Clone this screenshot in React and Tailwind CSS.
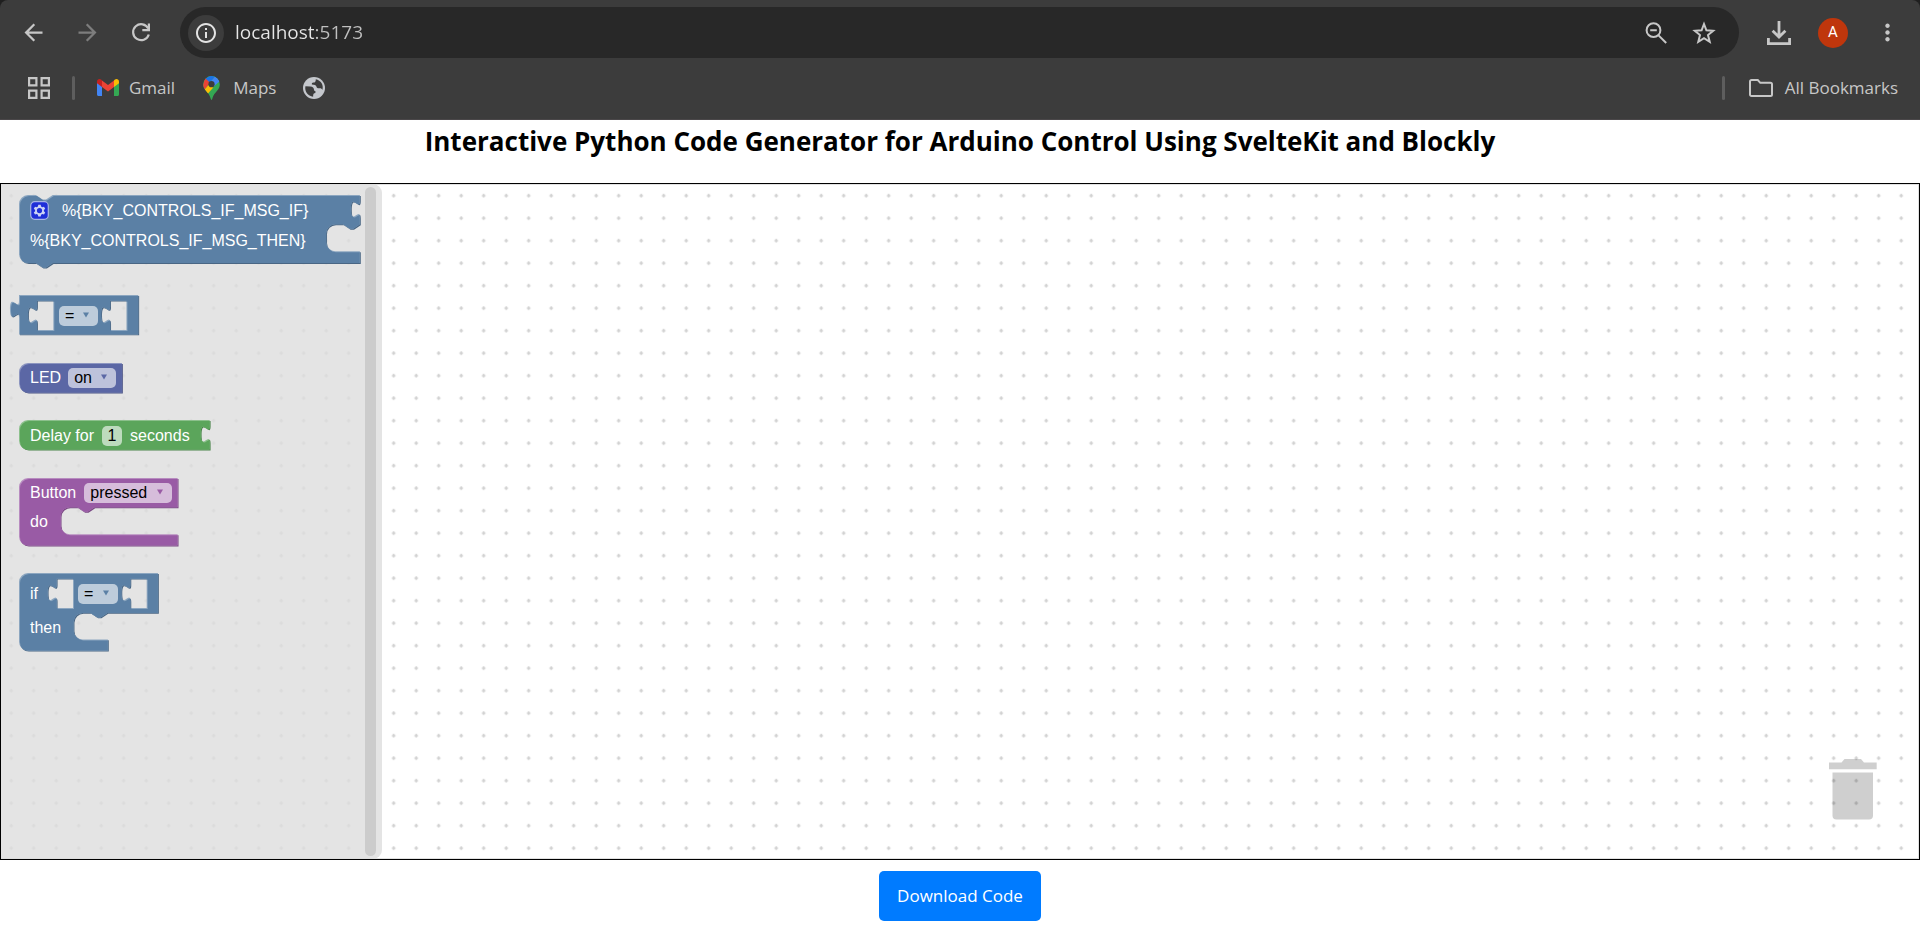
import { useId, useState } from "react";
import { MdArrowBack, MdArrowForward, MdInfoOutline, MdMoreVert } from "react-icons/md";

const TAB = "c 0,10 -8,-8 -8,7.5 s 8,-2.5 8,7.5";
const NOTCH = "l -6,4 h -3 l -6,-4";

const PALETTE = {
  logic: { main: "#5b80a5", light: "#8ca6c0", dark: "#496684" },
  led: { main: "#5b67a5", light: "#8c95c0", dark: "#495284" },
  delay: { main: "#5ba55b", light: "#8cc08c", dark: "#498449" },
  button: { main: "#995ba5", light: "#b88cc0", dark: "#7a4984" },
};

const hole = (x) => `M ${x},5 h 14.5 v 26 h -14.5 v -6 c 0,-10 -8,8 -8,-7.5 s 8,2.5 8,-7.5 Z`;

const SHAPES = {
  controlsIf: `M 0,8 a 8,8 0 0 1 8,-8 h 7 l 6,4 h 3 l 6,-4 H 303 v 5 ${TAB} V 26 ${NOTCH} h -7 a 8,8 0 0 0 -8,8 V 42 a 8,8 0 0 0 8,8 H 303 V 60.5 H 30 ${NOTCH} h -7 a 8,8 0 0 1 -8,-8 Z`,
  compare: `M 0,0 H 106 V 35 H 0 V 20 c 0,-10 -8,8 -8,-7.5 s 8,2.5 8,-7.5 Z ${hole(16)} ${hole(81)}`,
  led: "M 0,8 a 8,8 0 0 1 8,-8 H 91.5 V 26.3 H 8 a 8,8 0 0 1 -8,-8 Z",
  delay: `M 0,8 a 8,8 0 0 1 8,-8 H 169.5 v 5 ${TAB} V 26.3 H 8 a 8,8 0 0 1 -8,-8 Z`,
  button: `M 0,8 a 8,8 0 0 1 8,-8 H 141 V 26 H 67 ${NOTCH} h -7 a 8,8 0 0 0 -8,8 V 42 a 8,8 0 0 0 8,8 H 141 V 60 H 8 a 8,8 0 0 1 -8,-8 Z`,
  ifThen: `M 0,8 a 8,8 0 0 1 8,-8 H 123.5 V 35.5 H 78.5 ${NOTCH} h -7 a 8,8 0 0 0 -8,8 V 51 a 8,8 0 0 0 8,8 H 79 V 69 H 8 a 8,8 0 0 1 -8,-8 Z ${hole(33.5)} ${hole(99)}`,
};

function Block({ shape, tone, className, children }) {
  const id = useId();
  const c = PALETTE[tone];
  const d = SHAPES[shape];
  return (
    <div className={`relative ${className}`}>
      <svg className="absolute inset-0 h-full w-full overflow-visible" aria-hidden="true">
        <clipPath id={id}>
          <path d={d} clipRule="evenodd" />
        </clipPath>
        <g transform="scale(1.125)" fillRule="evenodd">
          <path d={d} fill={c.dark} transform="translate(0.8 0.8)" />
          <path d={d} fill={c.light} />
          <g clipPath={`url(#${id})`}>
            <path d={d} fill={c.main} transform="translate(0.9 0.9)" />
          </g>
        </g>
      </svg>
      <div className="relative">{children}</div>
    </div>
  );
}

function Picker({ label, options, tone, className }) {
  return (
    <span className="relative flex">
      <select
        aria-label={label}
        className={`h-5 appearance-none rounded-[5px] bg-white/60 pl-[6px] leading-5 text-black outline-none ${className}`}
      >
        {options.map((o) => (
          <option key={o}>{o}</option>
        ))}
      </select>
      <svg className="pointer-events-none absolute top-[6px] right-[9px] h-[6px] w-[6px]" viewBox="0 0 6 6" aria-hidden="true">
        <path d="M0 .5h6L3 5.5z" fill={PALETTE[tone].main} />
      </svg>
    </span>
  );
}

const OPERATORS = ["=", "≠", "<", "≤", ">", "≥"];

function Toolbox() {
  const [seconds, setSeconds] = useState("1");
  return (
    <aside className="relative flex w-[381px] shrink-0 justify-between rounded-r-[9px] bg-[#dddddd]/80 pr-[6px]">
      <div className="flex flex-col items-start gap-[27px] pt-[11px] pl-[18px] text-[16px] leading-5 text-white">
        <Block shape="controlsIf" tone="logic" className="h-[73px] w-[342px]">
          <div className="flex h-[31px] items-center gap-[13px] pl-[11px]">
            <button aria-label="Block settings" className="flex size-[19px] items-center justify-center">
              <svg viewBox="0 0 19 19" className="size-[19px]">
                <rect x=".7" y=".7" width="17.6" height="17.6" rx="4" fill="#1f2fd8" stroke="#a9b5e4" strokeWidth="1.2" />
                <path
                  d="M8.3 3.8h2.4l.4 1.7 1.2.7 1.7-.5 1.2 2.1-1.3 1.2v1.3l1.3 1.2-1.2 2.1-1.7-.5-1.2.7-.4 1.7H8.3l-.4-1.7-1.2-.7-1.7.5-1.2-2.1 1.3-1.2V9L3.8 7.8 5 5.7l1.7.5 1.2-.7z M9.5 7a2.6 2.6 0 1 0 0 5.2 2.6 2.6 0 0 0 0-5.2z"
                  fill="#ccd3f5"
                  fillRule="evenodd"
                />
              </svg>
            </button>
            <span>%{"{BKY_CONTROLS_IF_MSG_IF}"}</span>
          </div>
          <div className="flex h-[29px] items-center pl-[11px]">%{"{BKY_CONTROLS_IF_MSG_THEN}"}</div>
        </Block>

        <Block shape="compare" tone="logic" className="h-[41px] w-[120px]">
          <div className="flex h-[41px] items-center pl-10">
            <Picker label="Comparison" options={OPERATORS} tone="logic" className="w-[39px]" />
          </div>
        </Block>

        <Block shape="led" tone="led" className="h-[30px] w-[104px]">
          <div className="flex h-[30px] items-center gap-[7px] pl-[11px]">
            LED
            <Picker label="LED state" options={["on", "off"]} tone="led" className="w-[48px]" />
          </div>
        </Block>

        <Block shape="delay" tone="delay" className="h-[31px] w-[192px]">
          <div className="flex h-[31px] items-center gap-2 pl-[11px]">
            <label htmlFor="delay-seconds">Delay for</label>
            <input
              id="delay-seconds"
              value={seconds}
              onChange={(e) => setSeconds(e.target.value)}
              className="h-5 w-5 rounded-[5px] bg-white/60 text-center text-black outline-none"
            />
            seconds
          </div>
        </Block>

        <Block shape="button" tone="button" className="h-[68px] w-[160px]">
          <div className="flex h-[30px] items-center gap-2 pl-[11px]">
            Button
            <Picker label="Button state" options={["pressed", "released"]} tone="button" className="w-[88px]" />
          </div>
          <div className="flex h-[27px] items-center pl-[11px]">do</div>
        </Block>

        <Block shape="ifThen" tone="logic" className="h-[79px] w-[140px]">
          <div className="flex h-[41px] items-center pl-[11px]">
            <span className="w-12">if</span>
            <Picker label="Condition" options={OPERATORS} tone="logic" className="w-10" />
          </div>
          <div className="flex h-[27px] items-center pl-[11px]">then</div>
        </Block>
      </div>
      <div className="my-[3px] w-[11px] rounded-full bg-[#cccccc]" />
    </aside>
  );
}

function Grid() {
  return (
    <svg className="absolute inset-0 h-full w-full" aria-hidden="true">
      <defs>
        <pattern id="dots" width="22.5" height="22.5" patternUnits="userSpaceOnUse">
          <path d="M8.4 11.7h3.6M10.2 9.9v3.6" stroke="#d0d0d0" strokeWidth="1.6" />
        </pattern>
      </defs>
      <rect width="100%" height="100%" fill="url(#dots)" />
    </svg>
  );
}

function GmailIcon() {
  return (
    <svg viewBox="0 0 22 17" className="h-[17px] w-[22px]" aria-hidden="true">
      <path d="M0 3v12.5C0 16.3.7 17 1.5 17H5V6.5z" fill="#4285f4" />
      <path d="M22 3v12.5c0 .8-.7 1.5-1.5 1.5H17V6.5z" fill="#34a853" />
      <path d="M17 1.5V8l5-3.8V2.5C22 .3 19.5-.7 17.9.6z" fill="#fbbc04" />
      <path d="M5 8V1.5L11 6l6-4.5V8l-6 4.500z" fill="#ea4335" />
      <path d="M0 2.5v1.7L5 8V1.5L4.1.6C2.5-.7 0 .3 0 2.5z" fill="#c5221f" />
    </svg>
  );
}

function MapsIcon() {
  return (
    <svg viewBox="0 0 17 24" className="h-6 w-[17px]" aria-hidden="true">
      <clipPath id="pin">
        <path d="M8.5 0A8.3 8.3 0 0 0 .2 8.3c0 2.4.9 4.2 2.3 6 2.6 3.1 4.5 5 5.2 8.500.2 1.500 1.400 1.500 1.600 0 .7-3.500 2.600-5.400 5.200-8.500 1.400-1.800 2.300-3.600 2.300-6A8.300 8.300 0 0 0 8.500 0z" />
      </clipPath>
      <g clipPath="url(#pin)">
        <rect width="17" height="24" fill="#34a853" />
        <path d="M2 3l4.600 4L12 .8 8-1z" fill="#1a73e8" />
        <path d="M-1 12l2.800 1.500L7 6.800 2 2z" fill="#ea4335" />
        <path d="M1.500 13.800L6 8.500l4.300 3-6.400 7.300z" fill="#fbbc04" />
        <path d="M12 .5L7 6.500l4 3.800L18 4z" fill="#4285f4" />
      </g>
      <circle cx="8.500" cy="8.200" r="3.100" fill="#3c3c3c" />
    </svg>
  );
}

function GlobeIcon() {
  return (
    <svg viewBox="0 0 22 22" className="size-[22px]" aria-hidden="true">
      <circle cx="11" cy="11" r="11" fill="#c4c7cc" />
      <path
        d="M2.400 9.300l5 .3c2.200.1 3.600 1.300 3.600 3.200 0 .8.600 1.200 1.400 1.300v2c-1.800 0-2.200.7-2.300 3.600C5 19.200 1.400 14.500 2.400 9.300z M12.800 2.300c0 2.500-.6 3.300-2.400 3.300-1.300 0-1.700.7-1.500 1.800 2.500.2 4.300.4 4.600 2.400.2 1.300 1.600 1.600 3 1.500 1.500-.1 2.500.5 2.900 1.700 1.500-5.500-1.600-9.500-6.600-10.700z"
        fill="#3c3c3c"
      />
    </svg>
  );
}

function BrowserBar() {
  return (
    <header className="bg-[#1f1f1f] font-['Open_Sans',sans-serif] text-[#c7c7c7]">
      <div className="rounded-t-[8px] border-b border-[#4a4749] bg-[#3c3c3c] pt-[7px]">
        <div className="flex h-[51px] items-center pr-[19px] pl-5">
          <nav className="flex w-[160px] items-center gap-[27px] text-[27px]">
            <button aria-label="Back"><MdArrowBack /></button>
            <button aria-label="Forward" className="text-[#7d7d7d]"><MdArrowForward /></button>
            <button aria-label="Reload">
              <svg viewBox="0 0 27 27" className="size-[27px]" fill="none" stroke="currentColor" strokeWidth="2.200">
                <path d="M20.300 9.600A8 8 0 1 0 20.800 15.500" />
                <path d="M20.900 4.500v6.600h-6.600" />
              </svg>
            </button>
          </nav>
          <div className="flex h-full flex-1 items-center rounded-full bg-[#282828] pr-[23px] pl-2">
            <button aria-label="Site information" className="flex size-9 items-center justify-center rounded-full bg-[#3c3c3c] text-2xl text-[#e3e3e3]">
              <MdInfoOutline />
            </button>
            <input
              aria-label="Address"
              defaultValue="localhost:5173"
              className="ml-[11px] min-w-0 flex-1 bg-[linear-gradient(90deg,#e6e6e6_80px,#c0c0c0_80px)] bg-clip-text text-[19px] text-transparent caret-white outline-none"
            />
            <button aria-label="Zoom">
              <svg viewBox="0 0 24 24" className="size-6" fill="none" stroke="currentColor" strokeWidth="2">
                <circle cx="9.500" cy="9.200" r="6.900" />
                <path d="M14.300 14.100l7.900 7.900M6.200 9.200h6.600" />
              </svg>
            </button>
            <button aria-label="Bookmark this page" className="ml-6">
              <svg viewBox="0 0 24 24" className="size-6" fill="none" stroke="currentColor" strokeWidth="2">
                <path d="M12 3l2.400 6.300 6.800.5-5.200 4.300 1.700 6.700L12 17.100l-5.700 3.700L8 14.100 2.800 9.800l6.800-.5z" />
              </svg>
            </button>
          </div>
          <div className="flex items-center pl-7">
            <button aria-label="Downloads">
              <svg viewBox="0 0 24 24" className="size-6" fill="none" stroke="currentColor" strokeWidth="2.800">
                <path d="M12 0v15.500M5.600 9.700l6.400 6.400 6.400-6.400M1.400 17v5.600h21.200V17" />
              </svg>
            </button>
            <button className="ml-[27px] size-[30px] rounded-full bg-[#bf360c] font-[Roboto,sans-serif] text-[15px] text-white">A</button>
            <button aria-label="Menu" className="ml-[26px] text-[27px]"><MdMoreVert /></button>
          </div>
        </div>
        <div className="flex h-[61px] items-center pr-[22px] pb-[2px] pl-7 text-[17px]">
          <button aria-label="Apps">
            <svg viewBox="0 0 22 22" className="size-[22px]" fill="none" stroke="currentColor" strokeWidth="2.200">
              <path d="M1.100 1.100h7.300v7.300H1.100zM13.600 1.100h7.300v7.300h-7.300zM1.100 13.600h7.300v7.300H1.100zM13.600 13.600h7.300v7.300h-7.300z" />
            </svg>
          </button>
          <span className="mx-[22px] h-6 w-[3px] rounded-full bg-[#5e5e5e]" />
          <a href="#gmail" className="mr-7 flex items-center gap-[10px]"><GmailIcon />Gmail</a>
          <a href="#maps" className="mr-[27px] flex items-center gap-[13px]"><MapsIcon />Maps</a>
          <a href="#web" aria-label="Web page"><GlobeIcon /></a>
          <span className="mr-6 ml-auto h-6 w-[3px] rounded-full bg-[#5e5e5e]" />
          <button className="flex items-center gap-3">
            <svg viewBox="0 0 24 18" className="h-[18px] w-6" fill="none" stroke="currentColor" strokeWidth="2" aria-hidden="true">
              <path d="M2.500 1h6.300l2.500 2.800h10.200c.9 0 1.500.6 1.500 1.500v10.200c0 .9-.6 1.500-1.500 1.500h-19C1.600 17 1 16.400 1 15.500v-13C1 1.600 1.600 1 2.500 1z" />
            </svg>
            All Bookmarks
          </button>
        </div>
      </div>
    </header>
  );
}

export default function App() {
  return (
    <div className="flex min-h-screen flex-col bg-white font-['Open_Sans',sans-serif]">
      <BrowserBar />
      <h1 className="pt-[3px] pb-6 text-center text-[26px] leading-9 font-bold text-black">
        Interactive Python Code Generator for Arduino Control Using SvelteKit and Blockly
      </h1>
      <main className="relative flex flex-1 border border-black font-['Liberation_Sans',Arial,sans-serif]">
        <Grid />
        <div className="pointer-events-none absolute inset-0 border border-l-0 border-[#e2e2e2]" />
        <Toolbox />
        <button aria-label="Trash" className="absolute right-[42px] bottom-[39px]">
          <svg viewBox="0 0 48 61" className="h-[61px] w-12" fill="#000000" fillOpacity=".19">
            <path d="M0 3.500h12.500L15.500 0h16.500l3 3.500h12.700v6.700H0z" />
            <path d="M3.500 13.500h40.500v43a4 4 0 0 1-4 4H7.500a4 4 0 0 1-4-4z" />
          </svg>
        </button>
      </main>
      <footer className="flex justify-center pt-[11px] pb-6">
        <button className="h-[50px] rounded-[5px] bg-[#007bff] px-[18px] text-[17px] text-white">Download Code</button>
      </footer>
    </div>
  );
}
